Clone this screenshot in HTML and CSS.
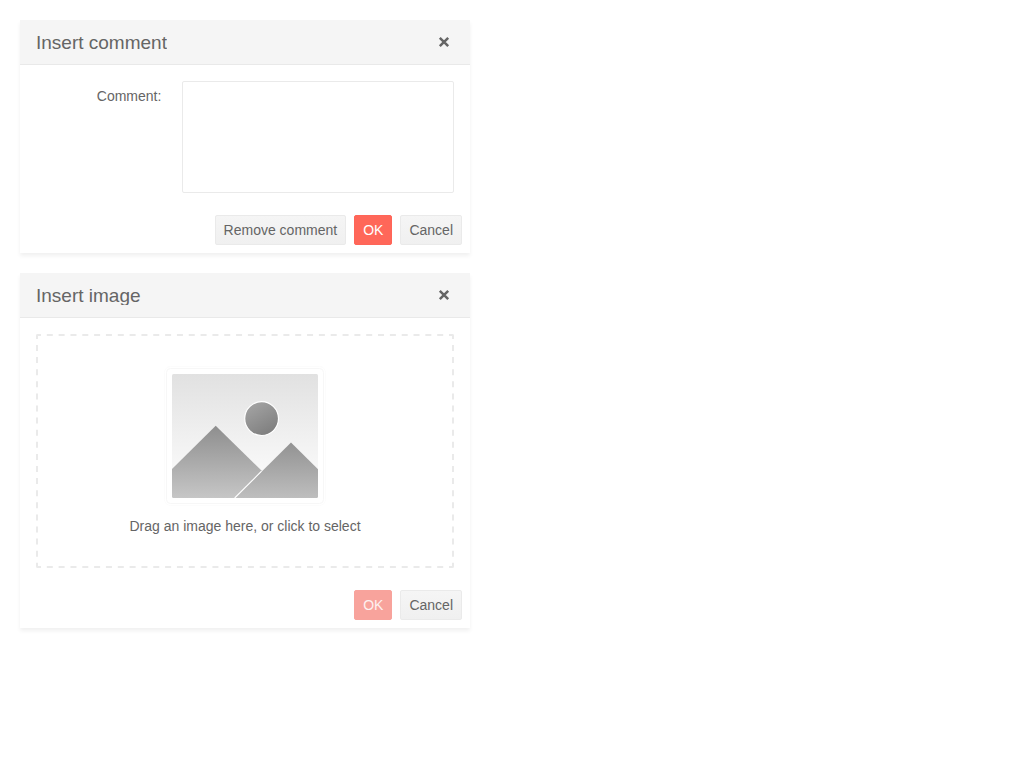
FILE: index.html
```html
<!DOCTYPE html>
<html lang="en">
<head>
<meta charset="utf-8">
<title>Dialogs</title>
<link rel="stylesheet" href="styles.css">
</head>
<body>
<section class="window">
  <header class="titlebar">
    <h2 class="title">Insert comment</h2>
    <button class="close" aria-label="Close"><svg width="12" height="12" viewBox="0 0 12 12"><path d="M1.800 1.800 10.200 10.200M10.200 1.800 1.800 10.200"/></svg></button>
  </header>
  <div class="form">
    <label class="label" for="comment">Comment:</label>
    <textarea class="textarea" id="comment"></textarea>
  </div>
  <footer class="actions">
    <button class="button">Remove comment</button>
    <button class="button primary">OK</button>
    <button class="button">Cancel</button>
  </footer>
</section>
<section class="window">
  <header class="titlebar">
    <h2 class="title">Insert image</h2>
    <button class="close" aria-label="Close"><svg width="12" height="12" viewBox="0 0 12 12"><path d="M1.800 1.800 10.200 10.200M10.200 1.800 1.800 10.200"/></svg></button>
  </header>
  <div class="content">
    <div class="dropzone">
      <svg class="outline" width="418" height="234" viewBox="0 0 418 234"><path class="across" d="M0 1H418M0 233H418"/><path class="down" d="M1 0V234M417 0V234"/></svg>
      <svg class="preview" width="162" height="142" viewBox="164 364 162 142">
        <defs>
          <linearGradient id="sky" x1="0" y1="0" x2="0" y2="1"><stop offset="0" stop-color="#e1e1e1"/><stop offset="1" stop-color="#fff"/></linearGradient>
          <linearGradient id="hill" x1="0" y1="0" x2="0" y2="1"><stop offset="0" stop-color="#8e8e8e"/><stop offset="1" stop-color="#c6c6c6"/></linearGradient>
          <linearGradient id="hill2" x1="0" y1="0" x2="0" y2="1"><stop offset="0" stop-color="#929292"/><stop offset="1" stop-color="#bebebe"/></linearGradient>
          <linearGradient id="sun" x1="0.2" y1="0" x2="0.8" y2="1"><stop offset="0" stop-color="#a4a4a4"/><stop offset="1" stop-color="#7c7c7c"/></linearGradient>
          <clipPath id="frame"><rect x="172" y="374" width="146" height="124" rx="1.5"/></clipPath>
        </defs>
        <rect x="164.500" y="366.500" width="161" height="139" rx="6" fill="none" stroke="#fcfcfc"/>
        <rect x="166.500" y="368.500" width="157" height="135" rx="4" fill="#fff" stroke="#f7f7f7"/>
        <g clip-path="url(#frame)">
          <rect x="172" y="374" width="146" height="124" fill="url(#sky)"/>
          <path d="M172 469 215.700 425.700 262 471 236 498H172Z" fill="url(#hill)"/>
          <path d="M235 498 291 442.500 318 469.300V498Z" fill="url(#hill2)"/>
          <path d="M234.700 498 261.500 471.200" stroke="#fff" stroke-width="1.100"/>
        </g>
        <circle cx="261.600" cy="418.600" r="16.900" fill="url(#sun)" stroke="#fff" stroke-width="1.200"/>
      </svg>
      <div class="hint">Drag an image here, or click to select</div>
    </div>
  </div>
  <footer class="actions">
    <button class="button primary disabled" disabled>OK</button>
    <button class="button">Cancel</button>
  </footer>
</section>
</body>
</html>
```
FILE: styles.css
```css
* { box-sizing: border-box; }
body {
  margin: 0;
  padding: 20px;
  display: flex;
  flex-direction: column;
  gap: 20px;
  background: #fff;
  color: #656565;
  font: 14px/20px "Liberation Sans", Arial, sans-serif;
}
.window {
  width: 450px;
  background: #fff;
  box-shadow: 0 3px 4px rgba(0, 0, 0, .06);
}
.titlebar {
  display: flex;
  align-items: center;
  justify-content: space-between;
  height: 45px;
  padding: 0 16px;
  background: #f5f5f5;
  border-bottom: 1px solid #e9e9e9;
}
.title {
  margin: 0;
  height: 20px;
  overflow: hidden;
  font-size: 19px;
  font-weight: 400;
  line-height: 22px;
}
.close {
  display: flex;
  align-items: center;
  justify-content: center;
  width: 20px;
  height: 20px;
  padding: 0;
  border: 0;
  background: none;
}
.close path {
  fill: none;
  stroke: #656565;
  stroke-width: 2.5;
}
.form {
  display: flex;
  gap: 20.600px;
  padding: 16px;
}
.label {
  width: 125.400px;
  padding-top: 5px;
  text-align: right;
}
.textarea {
  display: block;
  width: 272px;
  height: 112px;
  border: 1px solid #eaeaea;
  border-radius: 2px;
  background: #fff;
  resize: none;
}
.actions {
  display: flex;
  justify-content: flex-end;
  gap: 8px;
  padding: 6px 8px 8px;
}
.button {
  height: 30px;
  padding: 0 8px;
  border: 1px solid #eaeaea;
  border-radius: 2px;
  background: linear-gradient(#f5f5f5, #f0f0f0);
  color: #656565;
  font: inherit;
}
.primary {
  border-color: #ff6558;
  background: #ff6759;
  color: #fff;
}
.disabled {
  border-color: #f8a39c;
  background: #f8a39c;
  color: #fdf1f0;
}
.content { padding: 16px; }
.dropzone {
  position: relative;
  display: flex;
  flex-direction: column;
  align-items: center;
  height: 234px;
  padding-top: 30px;
}
.outline {
  position: absolute;
  inset: 0;
  border-radius: 2px;
  pointer-events: none;
}
.outline path {
  fill: none;
  stroke: #eaeaea;
  stroke-width: 2;
}
.across {
  stroke-dasharray: 6 5.83;
  stroke-dashoffset: 1.03;
}
.down {
  stroke-dasharray: 6 6.1;
  stroke-dashoffset: 1.1;
}
.preview { display: block; }
.hint { margin-top: 10px; }
```
